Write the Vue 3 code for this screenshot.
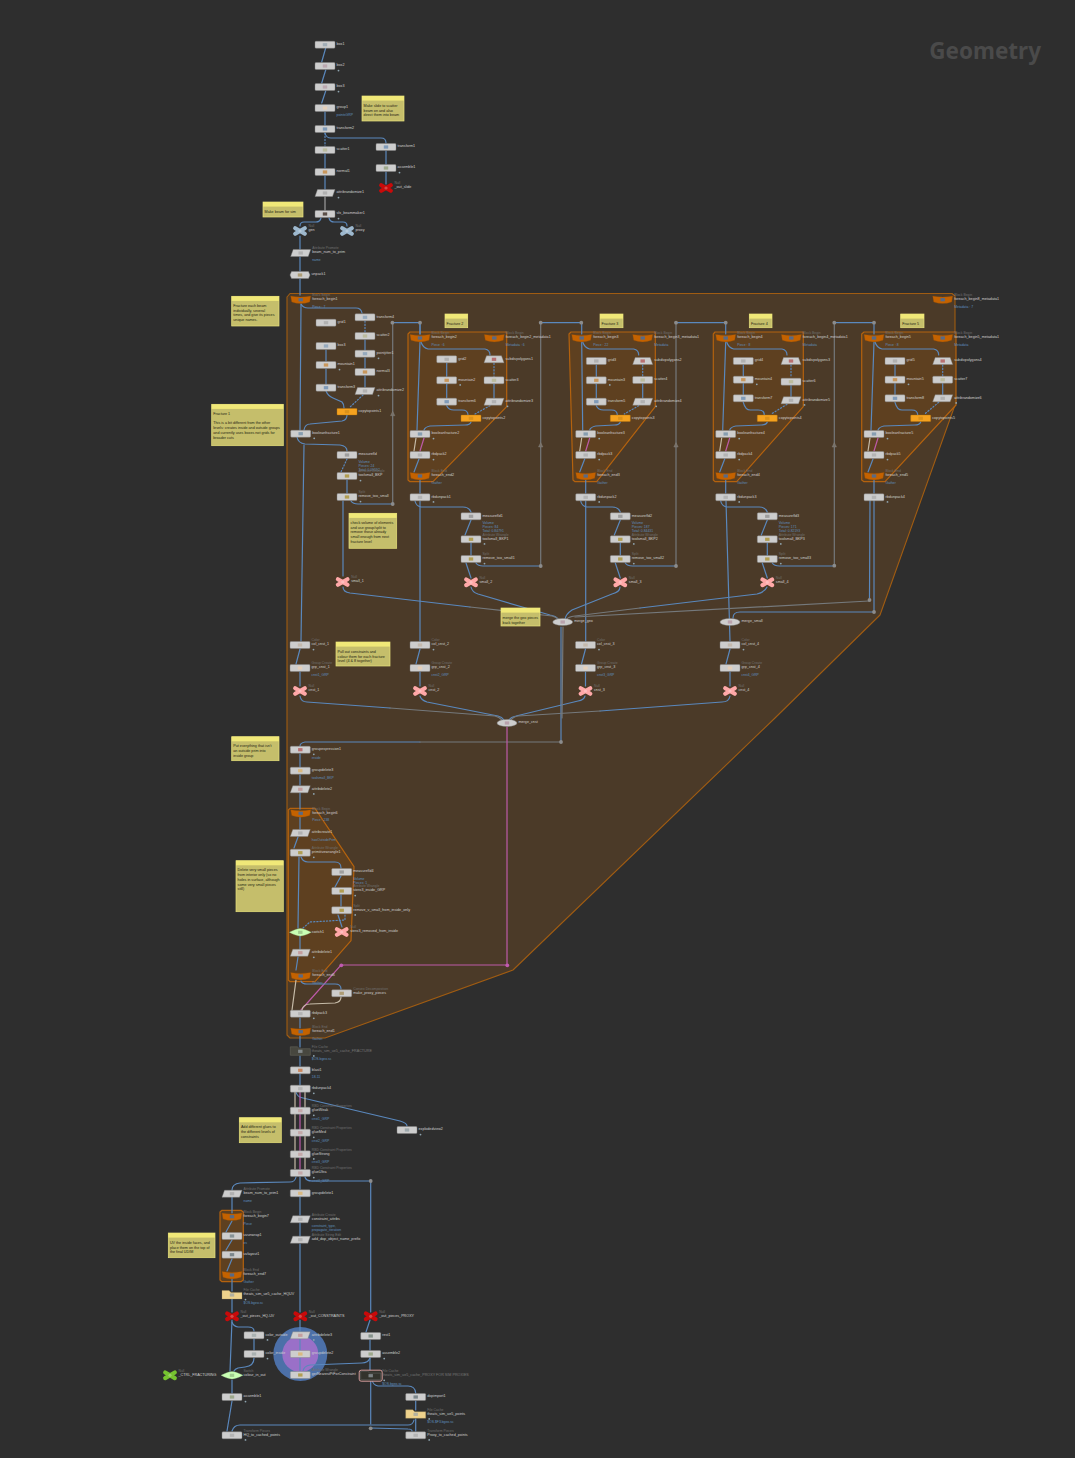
<script setup>
const nodes = []
const wires = []
const dots = []
const tris = []

function n(x, y, name, kind = 'box', o = {}) {
  nodes.push({ x, y, name, kind, t: o.t, sub: o.sub || [], f: o.f, c: o.c || '#9aa3a8', dim: o.dim })
}
function w(k, ...paths) {
  paths.forEach((d) => wires.push({ k, d }))
}

const RED = '#b04848', BL = '#5f86b0', OR = '#c8802c', SC = '#b5b58a', PT = '#a5a5a5', MT = '#7f9bb8', TAN = '#f0d0b0', YL = '#a58a1e'

/* top chain */
n(325, 44.7, 'box1', 'box', { c: '#8fa0ad' })
n(325, 66, 'box2', 'box', { f: 1, c: '#b59aa5' })
n(325, 87, 'box3', 'box', { f: 1, c: '#b59aa5' })
n(325, 108, 'group1', 'box', { sub: ['pointsGRP'], c: TAN })
n(325, 129, 'transform2', 'box', { c: BL })
n(325, 150, 'scatter1', 'box', { c: SC })
n(325, 172, 'normal1', 'box', { c: OR })
n(325, 193, 'attribrandomize1', 'para', { f: 1, c: PT })
n(325, 214, 'sfx_beammaker1', 'box', { f: 1, c: '#2a1a10' })
n(386, 147, 'transform1', 'box', { c: BL })
n(386, 168, 'assemble1', 'box', { f: 1, c: '#8a9a70' })
n(386, 188, '_out_slide', 'null-red', { t: 'Null' })
n(300, 231, 'gen', 'null-blue', { t: 'Null' })
n(347, 231, 'proxy', 'null-blue', { t: 'Null' })
n(300.7, 253, 'beam_num_to_prim', 'para', { t: 'Attribute Promote', sub: ['name'], c: PT })
n(300, 275, 'unpack1', 'hex', { c: '#a08850' })

/* fracture 1 */
n(300.7, 299.7, 'foreach_begin1', 'block', { t: 'Block Begin', sub: ['Piece : 7'] })
n(942.7, 299.7, 'foreach_begin8_metadata1', 'block', { t: 'Block Begin', sub: ['Metadata : 7'] })
n(326, 322.7, 'grid1', 'box', { c: PT })
n(326, 346, 'box3', 'box', { c: MT })
n(326, 365, 'mountain1', 'box', { f: 1, c: OR })
n(326, 387.7, 'transform3', 'box', { c: BL })
n(365, 317.3, 'transform4', 'box', { c: MT })
n(365, 336, 'scatter2', 'box', { c: SC })
n(365, 353.7, 'pointjitter1', 'box', { f: 1, c: MT })
n(365, 372, 'normal3', 'box', { c: OR })
n(365, 391, 'attribrandomize2', 'para', { f: 1, c: PT })
n(347, 411.7, 'copytopoints1', 'copy')
n(300.7, 433.7, 'booleanfracture1', 'box', { f: 1, c: '#6a8aa5' })
n(347, 455, 'measurefld', 'box', { sub: ['Volume', 'Pieces: 24', 'Total: 0.09592'], c: '#8a8a8a' })
n(347, 476, 'toolsmall_BKP', 'box', { f: 1, c: YL, t: 'Attribute Wrangle' })
n(347, 497, 'remove_too_small', 'box', { f: 1, c: YL, t: 'Split' })
n(342.7, 582, 'small_1', 'null-pink', { t: 'Null' })

w('blue', 'M325.7 48L321.7 62', 'M325.7 70L321.7 83', 'M325.7 91L321.7 103', 'M325 112V125', 'M325 154V168', 'M325 176V189',
  'M325 133Q326 138 331 138H381Q386 138 386 143', 'M386 151V164', 'M386 172V184',
  'M321 218Q320 222 316 222H304Q300 222 300 226', 'M329 218Q330 222 334 222H343Q347 222 347 226',
  'M300 236V249', 'M300 257V271', 'M300 279V295', 'M301 304L300 430',
  'M301 304Q303 308 308 308H356Q361 308 362 313', 'M326 350V361', 'M326 369V384', 'M365 340V350', 'M365 358V368', 'M365 376V387',
  'M326 391Q328 396 333 398L342 402Q344 404 344 408', 'M347 415Q347 420 342 421L310 424Q305 424 304 430',
  'M297 437Q298 443 305 444L340 445Q347 446 347 451', 'M347 480V493',
  'M343 501V576', 'M351 501Q353 504 358 504H392', 'M392 322.7H420', 'M420 322.7V334')
w('dash', 'M325 133V146', 'M365 321V332', 'M363 395L349 408', 'M347 459L341 472')
w('thick', 'M325 197V210')
w('blue', 'M304 445Q303 520 301 641')
w('fade', 'M392.7 504V322.7')

/* fractures 2-5 */
function frac(i, o) {
  const { bx, mx, gx, gy, sx, sy, cx, hx, kn } = o
  n(bx, 338, 'foreach_begin' + i, 'block', { t: 'Block Begin', sub: [o.piece] })
  n(mx, 338, 'foreach_begin' + i + '_metadata1', 'block', { t: 'Block Begin', sub: [o.meta] })
  n(gx, gy[0], 'grid' + i, 'box', { c: PT })
  n(gx, gy[1], 'mountain' + i, 'box', { f: 1, c: OR })
  n(gx, gy[2], 'transform' + o.tn, 'box', { c: BL })
  n(sx, sy[0], 'subdivpolygons' + (i - 1), 'trap', { c: RED })
  n(sx, sy[1], 'scatter' + o.sn, 'box', { c: SC })
  n(sx, sy[2], 'attribrandomize' + (i + 1), 'para', { f: 1, c: PT })
  n(cx, 418.3, 'copytopoints' + i, 'copy')
  n(hx, 434, 'booleanfracture' + i, 'box', { f: 1, c: '#6a8aa5' })
  n(hx, 455, 'rbdpack' + i, 'box', { f: 1, c: '#aaa' })
  n(hx, 476, 'foreach_end' + i, 'block', { t: 'Block End', sub: ['Gather'] })
  n(hx, 497.3, 'rbdunpack' + (i - 1), 'box', { f: 1, c: '#aaa' })
  w('blue', `M${gx} ${gy[0] + 4}V${gy[1] - 4}`, `M${gx} ${gy[1] + 4}V${gy[2] - 4}`, `M${sx} ${sy[1] + 4}V${sy[2] - 4}`,
    `M${bx} 342L${hx - 3} 430`,
    `M${bx + 1} 342Q${bx + 3} 348 ${bx + 8} 349H${sx - 9}Q${sx - 4} 350 ${sx - 4} 355`,
    `M${gx} ${gy[2] + 4}Q${gx + 2} 410 ${gx + 7} 410H${cx - 9}Q${cx - 3} 410 ${cx - 3} 415`,
    `M${cx} 422Q${cx - 1} 425 ${cx - 6} 425L${hx + 10} 426Q${hx + 5} 427 ${hx + 4} 430`,
    `M${hx - 1} 459L${hx - 6} 472`, `M${hx} 480V493`)
  w('dash', `M${sx} ${sy[0] + 4}V${sy[1] - 4}`, `M${sx - 4} ${sy[2] + 4}L${cx + 4} 414`)
  w('pale', `M${hx - 4} 438L${hx - 6} 451`)
  w('pink', `M${hx + 4} 438L${hx} 451`)
  if (kn) {
    n(cx, 516.3, 'measurefld' + (i - 1), 'box', { sub: ['Volume', 'Pieces: ' + kn[0], 'Total: ' + kn[1]], c: '#8a8a8a' })
    n(cx, 539.3, 'toolsmall_BKP' + (i - 1), 'box', { f: 1, c: YL, t: 'Attribute Wrangle' })
    n(cx, 559, 'remove_too_small' + (i - 1), 'box', { f: 1, c: YL, t: 'Split' })
    n(cx, 582.3, 'small_' + i, 'null-pink', { t: 'Null' })
    w('blue', `M${hx - 5} 501Q${hx - 4} 506 ${hx + 1} 507H${cx - 8}Q${cx - 2} 507 ${cx} 512`,
      `M${cx} 520L${cx - 6} 535`, `M${cx} 543V555`, `M${cx - 5} 563L${cx} 578`,
      `M${cx + 5} 563Q${cx + 7} 566 ${cx + 12} 566H${o.dot}`, `M${o.dot} 322.7H${o.to}`)
    w('fade', `M${o.dot} 566V322.7`)
  }
  w('blue', `M${bx} 322.7V334`)
}
frac(2, { bx: 420, mx: 494.3, gx: 446.7, gy: [359.3, 380.3, 401.7], sx: 494, sy: [359.3, 380.3, 401.7], cx: 471, hx: 420, kn: [84, '0.84791'], dot: 540.7, to: 581.3, tn: 6, sn: 3, piece: 'Piece : 6', meta: 'Metadata : 6' })
frac(3, { bx: 581.7, mx: 642.7, gx: 596.3, gy: [361, 380.3, 401.7], sx: 642.7, sy: [361, 380, 401.7], cx: 620.3, hx: 585.7, kn: [187, '0.84431'], dot: 676, to: 725.7, tn: 5, sn: 4, piece: 'Piece : 22', meta: 'Metadata' })
frac(4, { bx: 725.7, mx: 791.3, gx: 743.3, gy: [361, 379.7, 398.3], sx: 791, sy: [361, 381.7, 400.3], cx: 767.3, hx: 725.7, kn: [171, '0.82193'], dot: 834.3, to: 874, tn: 7, sn: 6, piece: 'Piece : 8', meta: 'Metadata' })
frac(5, { bx: 874, mx: 942.7, gx: 895, gy: [361, 379.7, 398.3], sx: 942.7, sy: [361, 379.7, 398.3], cx: 920.7, hx: 874, tn: 8, sn: 7, piece: 'Piece : 8', meta: 'Metadata' })

/* merges and constraints */
n(562.7, 622, 'merge_geo', 'oval', { c: '#b090a0' })
n(730, 622, 'merge_small', 'oval', { c: '#b090a0' })
n(507, 723, 'merge_cnst', 'oval', { c: '#b090a0' })
;[[300, 1], [420, 2], [585.5, 3], [730, 4]].forEach(([x, i]) => {
  n(x, 645, 'col_cnst_' + i, 'box', { t: 'Color', f: 1, c: '#c0b0a0' })
  n(x, 668, 'grp_cnst_' + i, 'box', { t: 'Group Create', sub: ['cnst' + i + '_GRP'], c: TAN })
  n(x, 691, 'cnst_' + i, 'null-pink', { t: 'Null' })
  w('blue', `M${x} 649L${x - 4} 664`, `M${x} 672V686`)
})
w('blue', 'M420 501V641', 'M585.7 501V641', 'M726 501L730 641',
  'M343 587Q343 592 350 593L470 607', 'M471 587Q472 592 478 594L550 615Q556 616 558 619',
  'M620 587Q620 592 612 594L572 610Q566 614 565 619', 'M767 587Q765 592 757 594L640 608',
  'M874 612H740Q733 612 733 618',
  'M300 696Q301 702 307 702L390 708', 'M420 696Q421 700 427 702L498 716Q502 717 504 720',
  'M585 696Q584 700 578 701L516 716Q511 717 509 720', 'M730 696Q729 702 722 702L600 711',
  'M870 500L869.5 598', 'M874 500V612',
  'M561 627V742', 'M420 742H305Q300 743 300 746')
w('fade', 'M470 607L552 616Q556 617 558 619', 'M640 608L575 616Q568 617 567 619', 'M869 601L575 617',
  'M390 708L495 716Q499 717 502 720', 'M600 711L518 716Q513 717 511 720', 'M561 742H420')
w('fade', 'M563 627L562 718')
w('pink', 'M507 727V965H341L301 1010')

/* sub group */
n(300.3, 749.7, 'groupexpression1', 'box', { f: 1, sub: ['inside'], c: RED })
n(300.3, 770.7, 'groupdelete3', 'box', { sub: ['toolsmall_BKP'], c: '#e0b060' })
n(300.3, 789.3, 'attribdelete2', 'para', { f: 1, c: '#c08a8a' })
n(300.7, 813.3, 'foreach_begin6', 'block', { t: 'Block Begin', sub: ['Piece : 238'] })
n(300.3, 833, 'attribcreate1', 'para', { sub: ['hasOutsidePrim'], c: PT })
n(300.3, 852.7, 'primitivewrangle1', 'box', { t: 'Attribute Wrangle', f: 1, c: YL })
n(341.7, 872, 'measurefld4', 'box', { sub: ['Volume', 'Pieces: 1'], c: '#8a8a8a' })
n(341.7, 891, 'stero3_inside_GRP', 'box', { f: 1, c: YL, t: 'Attribute Wrangle' })
n(341.7, 910.3, 'remove_v_small_from_inside_only', 'box', { f: 1, t: 'Split', c: YL })
n(341.7, 932, 'stero3_removed_from_inside', 'null-pink', { t: 'Null' })
n(300.3, 932.3, 'switch1', 'diamond')
n(300.3, 952.7, 'attribdelete1', 'para', { f: 1, c: '#c08a8a' })
n(300.7, 976, 'foreach_end6', 'block', { t: 'Block End', sub: ['Gather'] })
n(341.7, 993.3, 'make_proxy_pieces', 'box', { t: 'Convex Decomposition', c: '#a08850' })
n(300.3, 1013.7, 'rbdpack3', 'box', { f: 1, c: '#aaa' })
n(300.7, 1031.7, 'foreach_end1', 'block', { t: 'Block End', sub: ['Gather'] })
n(300.3, 1051.3, 'theats_sim_ue5_cache_FRACTURE', 'fdark', { t: 'File Cache', f: 1, sub: ['$OS.bgeo.sc'], dim: 1 })
n(300.3, 1070.3, 'blast1', 'box', { sub: ['18-11'], c: '#c86a30' })
n(300.3, 1088.7, 'rbdunpack4', 'box', { f: 1, c: '#aaa' })
n(300.3, 1110.7, 'glueWeak', 'box', { t: 'RBD Constraint Properties', f: 1, sub: ['cnst1_GRP'], c: '#c09a9a' })
n(300.3, 1132.7, 'glueMed', 'box', { t: 'RBD Constraint Properties', f: 1, sub: ['cnst2_GRP'], c: '#c09a9a' })
n(300.3, 1154.3, 'glueStrong', 'box', { t: 'RBD Constraint Properties', f: 1, sub: ['cnst3_GRP'], c: '#c09a9a' })
n(300.3, 1173, 'glueUltra', 'box', { t: 'RBD Constraint Properties', f: 1, sub: ['cnst4_GRP'], c: '#c09a9a' })
n(407, 1130, 'explodedview2', 'box', { f: 1, c: '#8a9aa0' })
n(300.3, 1193.3, 'groupdelete1', 'box', { c: '#e0b060' })
n(300.3, 1219.3, 'constraint_attribs', 'para', { t: 'Attribute Create', sub: ['constraint_type,', 'propagate_iteration'], c: PT })
n(300.3, 1239.7, 'add_dop_object_name_prefix', 'para', { t: 'Attribute String Edit', c: PT })
n(232, 1193.7, 'beam_num_to_prim1', 'para', { t: 'Attribute Promote', sub: ['name'], c: PT })
n(232, 1216.7, 'foreach_begin7', 'block', { t: 'Block Begin', sub: ['Piece'] })
n(232, 1236, 'uvunwrap1', 'box', { sub: ['xs'], c: '#6a7a80' })
n(232, 1254.7, 'uvlayout1', 'box', { c: '#5a6a70' })
n(232, 1275, 'foreach_end7', 'block', { t: 'Block End', sub: ['Gather'] })
n(232, 1295, 'theats_sim_ue5_cache_HQUV', 'folder', { t: 'File Cache', f: 1, sub: ['$OS.bgeo.sc'] })
n(232, 1316.3, '_out_pieces_HQ-UV', 'null-red', { t: 'Null' })
n(300.3, 1316.3, '_out_CONSTRAINTS', 'null-red', { t: 'Null' })
n(370.7, 1316.3, '_out_pieces_PROXY', 'null-red', { t: 'Null' })
n(254, 1335.3, 'color_outside', 'box', { f: 1, c: '#9aa5a5' })
n(254, 1354, 'color_inside', 'box', { f: 1, c: '#9aa5a5' })
n(300.3, 1335.3, 'attribdelete3', 'para', { f: 1, c: '#c08a8a' })
n(300.3, 1354, 'groupdelete2', 'box', { c: '#e0b060' })
n(300.3, 1375, 'getNearestPtForConstraint', 'box', { t: 'Attribute Wrangle', c: YL })
n(370.7, 1336, 'rest1', 'box', { c: '#6a7a70' })
n(370.7, 1354, 'assemble2', 'box', { f: 1, c: '#8a9a70' })
n(370.7, 1375.7, 'theats_sim_ue5_cache_PROXY FOR SIM PROXIES', 'fsel', { t: 'File Cache', f: 1, sub: ['$OS.bgeo.sc'], dim: 1 })
n(232, 1375.3, 'colour_in_out', 'diamond', { t: 'Switch' })
n(170, 1375.3, '_CTRL_FRACTURING', 'null-green', { t: 'Null' })
n(232, 1397, 'assemble1', 'box', { f: 1, c: '#8a9a70' })
n(232, 1435.3, 'HQ_to_cached_points', 'box', { t: 'Transform Pieces', f: 1, c: '#aaa' })
n(415.7, 1397, 'dopimport1', 'box', { c: '#5a6a70' })
n(415.7, 1414.3, 'theats_sim_ue5_points', 'folder', { t: 'File Cache', f: 1, sub: ['$OS.$F3.bgeo.sc'] })
n(415.7, 1435.3, 'Proxy_to_cached_points', 'box', { t: 'Transform Pieces', f: 1, c: '#aaa' })

w('blue', 'M300 754V767', 'M300 775V785', 'M300 793V809', 'M300 817V829', 'M298 837L294 848', 'M299 857L298 928',
  'M301 857Q303 862 308 862H335Q341 862 341 868', 'M341 876L335 887', 'M341 895V906', 'M338 915L342 927',
  'M300 936V949', 'M298 957L296 970', 'M301 981Q302 984 307 984H335Q341 984 341 989',
  'M300 1018V1028', 'M300 1036V1047', 'M300 1056V1066', 'M300 1074V1085',
  'M296 1092Q297 1097 303 1098L400 1121Q407 1123 407 1126',
  'M296 1177Q295 1182 290 1182L240 1183Q232 1184 232 1190', 'M305 1177Q306 1181 312 1181H370.7', 'M370.7 1181V1312',
  'M300 1177V1189', 'M300 1197V1215', 'M300 1223V1236', 'M300 1244V1312', 'M232 1197V1213', 'M232 1221L226 1232', 'M232 1240L226 1250',
  'M232 1259L227 1271', 'M232 1279V1291', 'M232 1299V1312', 'M232 1320L230 1371', 'M232 1322Q233 1326 238 1327H248Q254 1327 254 1331',
  'M254 1339V1350', 'M254 1358Q254 1366 245 1367L238 1368Q235 1369 234 1371', 'M300 1320V1331', 'M300 1339V1350', 'M300 1358V1371',
  'M370 1358Q368 1363 362 1363L310 1365Q304 1366 303 1371', 'M370 1320L366 1332', 'M370 1340V1350', 'M370 1358V1371', 'M370.7 1380V1424',
  'M372 1380Q373 1385 378 1386H408Q415 1386 415.7 1393', 'M415.7 1401V1410', 'M415.7 1419V1431', 'M371 1428L408 1429Q412 1429 412 1431',
  'M232 1380V1393', 'M232 1401L227 1431', 'M414 1420Q413 1425 408 1425H240Q234 1425 232 1431')
w('dash', 'M345 915V920L310 922L303 928')
w('pale', 'M296 980L292 1010', 'M341 997Q341 1002 335 1003L310 1004Q303 1004 302 1010', 'M295 1092V1169', 'M305 1092V1169')
w('pink', 'M300 1092V1169')

dots.push([392.4, 322.7], [420, 322.7], [540.7, 322.7], [581.3, 322.7], [676, 322.7], [725.7, 322.7], [834.3, 322.7], [874, 322.7],
  [392.7, 504], [540.7, 566], [676, 566], [834.3, 565.7], [869.5, 600], [874, 612], [561, 742], [370.7, 1181], [370.7, 1428.3])
tris.push([392.7, 413.7], [540.7, 445], [676, 445], [834.3, 445])

const pinkDots = [[341.3, 965.3], [507.3, 965.3]]

const frames = [
  { k: 'outer', p: '287,297 290,293.5 952,293.5 955,296 955,405 880,615 775,718 513,970 325,1038 290,1038 287,1035' },
  { k: 'inner', p: '408,334 410,332 506.7,332 506.7,406.7 433,481.7 410,481.7 408,480' },
  { k: 'inner', p: '569,334 571,332 655.3,332 655.3,406.7 596.7,481.7 575,481.7 573,480' },
  { k: 'inner', p: '713.3,334 715,332 803.3,332 803.3,406.7 736.7,481.7 715,481.7 713.3,480' },
  { k: 'inner', p: '861.7,334 864,332 956,332 956,405 885,481.7 864,481.7 861.7,480' },
  { k: 'inner', p: '288.3,810 290,808.3 315,808.3 354,866.7 351,940.7 315,981.7 290,981.7 288.3,980' },
  { k: 'inner', p: '220,1212 222,1210.3 241,1210.3 243.3,1212 243.3,1280 241,1281.7 222,1281.7 220,1280' },
]

const notes = [
  { x: 362, y: 96, w: 42, h: 25, l: ['Make slide to scatter', 'beam on and also', 'direct them into beam'] },
  { x: 263, y: 202, w: 40, h: 15, l: ['Make beam for sim'] },
  { x: 231.7, y: 296.3, w: 47.3, h: 29.7, l: ['Fracture each beam', 'individually, several', 'times, and give its pieces', 'unique names.'] },
  { x: 211.7, y: 404.3, w: 71.6, h: 41.4, l: ['Fracture 1', '', 'This is a bit different from the other', 'levels: creates inside and outside groups', 'and currently uses boxes not grids for', 'broader cuts'] },
  { x: 349, y: 513.3, w: 47.7, h: 35, l: ['check volume of elements', 'and use group/split to', 'remove those already', 'small enough from next', 'fracture level'] },
  { x: 445, y: 314, w: 22.7, h: 13.7, l: ['Fracture 2'] },
  { x: 600, y: 314, w: 23, h: 13.7, l: ['Fracture 3'] },
  { x: 749.3, y: 314, w: 22.7, h: 13.7, l: ['Fracture 4'] },
  { x: 900.7, y: 314, w: 23.3, h: 13.7, l: ['Fracture 5'] },
  { x: 501, y: 608, w: 39, h: 18, l: ['merge the geo pieces', 'back together'] },
  { x: 336, y: 642, w: 54, h: 24, l: ['Pull out constraints and', 'colour them for each fracture', 'level (4 & 8 together)'] },
  { x: 231.7, y: 736.7, w: 47.3, h: 24, l: ["Put everything that isn't", 'an outside prim into', 'inside group'] },
  { x: 236, y: 860.7, w: 47.3, h: 51, l: ['Delete very small pieces', 'from interior only (so no', 'holes in surface, although', 'some very small pieces', 'still)'] },
  { x: 239.3, y: 1117.7, w: 42, h: 25, l: ['Add different glues to', 'the different levels of', 'constraints'] },
  { x: 168.3, y: 1233, w: 46.7, h: 24.7, l: ['UV the inside faces, and', 'place them on the top of', 'the final UDIM'] },
]

const isNull = (k) => k.startsWith('null')
const labelX = (o) => (isNull(o.kind) ? 8.5 : 11.5)
const iconFill = (o) => (o.kind === 'block' ? '#2a6ec0' : o.kind === 'copy' ? '#d08a18' : o.kind === 'diamond' ? '#90b880' : o.c)
</script>

<template>
  <svg class="graph" viewBox="0 0 1075 1458" role="img">
    <text class="title" x="1041" y="58.5">Geometry</text>

    <polygon v-for="(f, i) in frames" :key="'f' + i" :class="f.k" :points="f.p" />

    <circle class="halo-blue" cx="300.3" cy="1354" r="27" />
    <circle class="halo-purple" cx="300.3" cy="1354" r="18" />

    <path v-for="(wr, i) in wires" :key="'w' + i" :class="['wire', wr.k]" :d="wr.d" />

    <polygon v-for="(t, i) in tris" :key="'t' + i" class="tri" :transform="`translate(${t[0]} ${t[1]})`" points="0,-2.4 2.2,2 -2.2,2" />
    <circle v-for="(d, i) in dots" :key="'d' + i" class="dot" :cx="d[0]" :cy="d[1]" r="1.9" />
    <circle v-for="(d, i) in pinkDots" :key="'p' + i" class="pink-dot" :cx="d[0]" :cy="d[1]" r="1.9" />

    <g v-for="(nt, i) in notes" :key="'n' + i" :transform="`translate(${nt.x} ${nt.y})`">
      <rect class="note" :width="nt.w" :height="nt.h" />
      <rect class="note-band" :width="nt.w" height="4.6" />
      <text v-for="(line, j) in nt.l" :key="j" class="note-text" x="1.6" :y="10.8 + j * 4.7">{{ line }}</text>
    </g>

    <g v-for="(o, i) in nodes" :key="'o' + i" :transform="`translate(${o.x} ${o.y})`">
      <rect v-if="o.kind === 'box'" class="body" x="-10" y="-3.5" width="20" height="7" rx="1" />
      <polygon v-else-if="o.kind === 'para'" class="body" points="-7.5,-3.5 10,-3.5 7.5,3.5 -10,3.5" />
      <polygon v-else-if="o.kind === 'trap'" class="body" points="-7.5,-3.5 7.5,-3.5 10,3.5 -10,3.5" />
      <polygon v-else-if="o.kind === 'hex'" class="body" points="-8.5,-3.5 8.5,-3.5 10,0 8.5,3.5 -8.5,3.5 -10,0" />
      <rect v-else-if="o.kind === 'copy'" class="copy" x="-10" y="-3.2" width="20" height="6.4" rx="0.6" />
      <path v-else-if="o.kind === 'block'" class="block" d="M-10 -3.6Q0 -1.6 10 -3.6L9 2.2Q0 5.6 -9 2.2Z" />
      <ellipse v-else-if="o.kind === 'oval'" class="body" rx="10" ry="3.6" />
      <path v-else-if="o.kind === 'diamond'" class="diamond" d="M-11 0Q-4 -3.8 0 -3.8T11 0Q4 3.8 0 3.8T-11 0Z" />
      <path v-else-if="o.kind === 'folder'" class="folder" d="M-10 -4.5H-3L-1 -2.6H10V4H-10Z" />
      <path v-else-if="o.kind === 'fdark'" class="fdark" d="M-10 -4.5H-3L-1 -2.6H10V4H-10Z" />
      <g v-else-if="o.kind === 'fsel'">
        <rect class="fsel-ring" x="-11.5" y="-5.5" width="23" height="11" rx="2" />
        <path class="fdark-on" d="M-10 -4.5H-3L-1 -2.6H10V4H-10Z" />
      </g>
      <g v-else-if="isNull(o.kind)" :class="o.kind">
        <line x1="-4.8" y1="-2.8" x2="4.8" y2="2.8" />
        <line x1="-4.8" y1="2.8" x2="4.8" y2="-2.8" />
      </g>

      <rect v-if="!isNull(o.kind)" class="icon" x="-2.2" y="-1.6" width="4.4" height="3.2" :fill="iconFill(o)" />
      <circle v-else class="null-core" r="1.6" />

      <text v-if="o.t" class="type" :x="labelX(o)" y="-3.6">{{ o.t }}</text>
      <text :class="['name', { dim: o.dim }]" :x="labelX(o)" y="0.3">{{ o.name }}</text>
      <circle v-if="o.f" class="flag" :cx="labelX(o) + 2" cy="4.6" r="0.9" />
      <text v-for="(s, j) in o.sub" :key="j" class="sub" :x="labelX(o)" :y="(o.f ? 9 : 8) + j * 4">{{ s }}</text>
    </g>
  </svg>
</template>

<style>
html, body { margin: 0; background: #2e2e2e; }
</style>

<style scoped>
.graph { display: block; width: 1075px; height: 1458px; background: #2e2e2e; font-family: "Liberation Sans", Arial, sans-serif; }
.title { font-family: "Noto Sans", sans-serif; font-weight: 700; font-size: 22.5px; fill: #4a4a4a; text-anchor: end; }
.outer { fill: #4b3a28; stroke: #a05c12; stroke-width: 1.1; stroke-linejoin: round; }
.inner { fill: #5e4020; stroke: #b4620e; stroke-width: 1.2; stroke-linejoin: round; }
.halo-blue { fill: #4c70a8; }
.halo-purple { fill: #9a70c8; }
.wire { fill: none; stroke-width: 1.2; stroke-linecap: round; }
.blue { stroke: #5a88bd; }
.fade { stroke: #75797c; }
.thick { stroke: #8d8d8d; stroke-width: 1.4; }
.dash { stroke: #5a88bd; stroke-dasharray: 1.2 2; }
.pale { stroke: #c6bba8; }
.pink { stroke: #bd5aa8; }
.dot { fill: #8c8c8c; }
.pink-dot { fill: #c05ab0; }
.tri { fill: #77716a; stroke: #8b857e; stroke-width: 0.4; }
.note { fill: #c5be6b; stroke: #e9e27c; stroke-width: 0.7; }
.note-band { fill: #f0e878; }
.note-text { font-size: 3.7px; fill: #1f1e12; }
.body { fill: #cdcdcd; stroke: #7f7f7f; stroke-width: 0.4; }
.copy { fill: #f5a21f; stroke: #b87610; stroke-width: 0.4; }
.block { fill: #c46200; stroke: #8f4a05; stroke-width: 0.3; }
.diamond { fill: #c9ffb4; stroke: #8fb880; stroke-width: 0.3; }
.folder { fill: #eed28c; stroke: #a8935c; stroke-width: 0.3; }
.fdark { fill: #47473f; stroke: #6a6a60; stroke-width: 0.5; }
.fdark-on { fill: #33332c; stroke: #777; stroke-width: 0.4; }
.fsel-ring { fill: #33332c; stroke: #e8a8a8; stroke-width: 0.9; }
.icon { opacity: 0.7; }
.null-blue line, .null-red line, .null-pink line, .null-green line { stroke-width: 4.2; stroke-linecap: round; }
.null-blue line { stroke: #9db8ce; }
.null-red line { stroke: #c80a0a; }
.null-pink line { stroke: #ffa8a8; }
.null-green line { stroke: #76c230; }
.null-core { fill: #ffffff; opacity: 0.25; }
.type { font-size: 3.4px; fill: #6f6f6f; }
.name { font-size: 3.7px; fill: #cfcfcf; }
.dim { fill: #777777; }
.flag { fill: #8fa5b0; }
.sub { font-size: 3.4px; fill: #5f8ebf; }
</style>
